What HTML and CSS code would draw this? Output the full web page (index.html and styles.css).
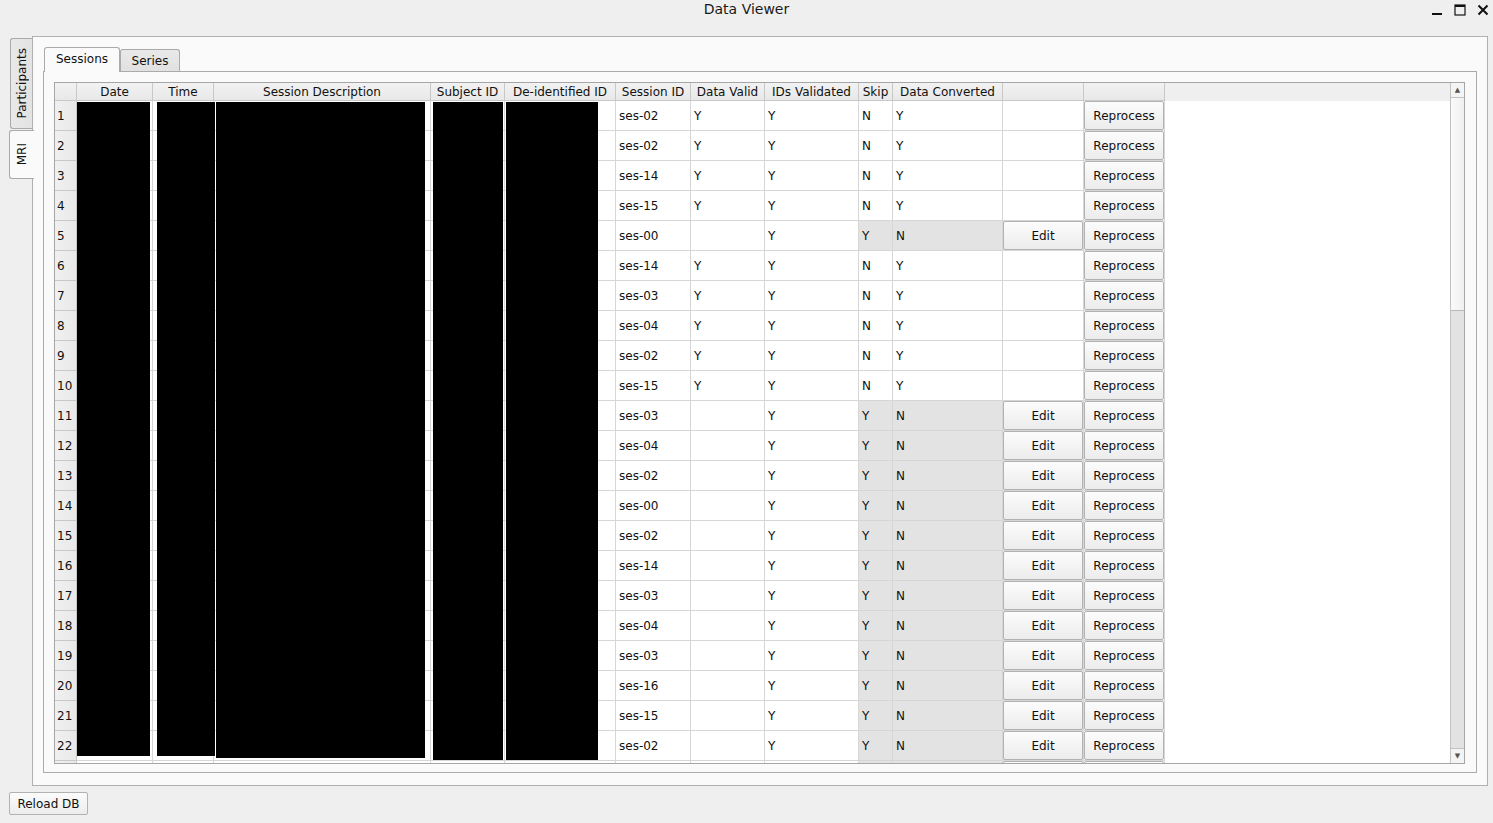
FILE: index.html
```html
<!DOCTYPE html>
<html>
<head>
<meta charset="utf-8">
<title>Data Viewer</title>
<link rel="stylesheet" href="styles.css">
</head>
<body>
<div class="titlebar">
  <div></div>
  <div class="title">Data Viewer</div>
  <div class="wctl">
    <svg width="12" height="12" viewBox="0 0 12 12"><rect x="1" y="9" width="10" height="2" fill="#111"/></svg>
    <svg width="12" height="12" viewBox="0 0 12 12"><rect x="1" y="1" width="10" height="10" fill="none" stroke="#111" stroke-width="1.2"/><rect x="1" y="1" width="10" height="2" fill="#111"/></svg>
    <svg width="12" height="12" viewBox="0 0 12 12"><path d="M1.5 1.5 L10.5 10.5 M10.5 1.5 L1.5 10.5" stroke="#111" stroke-width="2" fill="none"/></svg>
  </div>
</div>
<div class="main">
  <div class="vtabs">
    <div class="vtab"><span>Participants</span></div>
    <div class="vtab sel"><span>MRI</span></div>
  </div>
  <div class="frame">
    <div class="tabs">
      <div class="tab sel">Sessions</div>
      <div class="tab">Series</div>
    </div>
    <div class="pane">
      <div class="table">
        <div class="view">
          <div class="hdr">
            <div class="hrow">
              <div></div><div>Date</div><div>Time</div><div>Session Description</div><div>Subject ID</div><div>De-identified ID</div><div>Session ID</div><div>Data Valid</div><div>IDs Validated</div><div>Skip</div><div>Data Converted</div><div></div><div></div>
            </div>
          </div>
          <div class="body">
            <div class="row"><div class="vh">1</div><div></div><div></div><div></div><div></div><div></div><div>ses-02</div><div>Y</div><div>Y</div><div>N</div><div>Y</div><div></div><div class="bc"><button class="btn">Reprocess</button></div></div>
            <div class="row"><div class="vh">2</div><div></div><div></div><div></div><div></div><div></div><div>ses-02</div><div>Y</div><div>Y</div><div>N</div><div>Y</div><div></div><div class="bc"><button class="btn">Reprocess</button></div></div>
            <div class="row"><div class="vh">3</div><div></div><div></div><div></div><div></div><div></div><div>ses-14</div><div>Y</div><div>Y</div><div>N</div><div>Y</div><div></div><div class="bc"><button class="btn">Reprocess</button></div></div>
            <div class="row"><div class="vh">4</div><div></div><div></div><div></div><div></div><div></div><div>ses-15</div><div>Y</div><div>Y</div><div>N</div><div>Y</div><div></div><div class="bc"><button class="btn">Reprocess</button></div></div>
            <div class="row"><div class="vh">5</div><div></div><div></div><div></div><div></div><div></div><div>ses-00</div><div></div><div>Y</div><div class="g">Y</div><div class="g">N</div><div class="bc g"><button class="btn">Edit</button></div><div class="bc"><button class="btn">Reprocess</button></div></div>
            <div class="row"><div class="vh">6</div><div></div><div></div><div></div><div></div><div></div><div>ses-14</div><div>Y</div><div>Y</div><div>N</div><div>Y</div><div></div><div class="bc"><button class="btn">Reprocess</button></div></div>
            <div class="row"><div class="vh">7</div><div></div><div></div><div></div><div></div><div></div><div>ses-03</div><div>Y</div><div>Y</div><div>N</div><div>Y</div><div></div><div class="bc"><button class="btn">Reprocess</button></div></div>
            <div class="row"><div class="vh">8</div><div></div><div></div><div></div><div></div><div></div><div>ses-04</div><div>Y</div><div>Y</div><div>N</div><div>Y</div><div></div><div class="bc"><button class="btn">Reprocess</button></div></div>
            <div class="row"><div class="vh">9</div><div></div><div></div><div></div><div></div><div></div><div>ses-02</div><div>Y</div><div>Y</div><div>N</div><div>Y</div><div></div><div class="bc"><button class="btn">Reprocess</button></div></div>
            <div class="row"><div class="vh">10</div><div></div><div></div><div></div><div></div><div></div><div>ses-15</div><div>Y</div><div>Y</div><div>N</div><div>Y</div><div></div><div class="bc"><button class="btn">Reprocess</button></div></div>
            <div class="row"><div class="vh">11</div><div></div><div></div><div></div><div></div><div></div><div>ses-03</div><div></div><div>Y</div><div class="g">Y</div><div class="g">N</div><div class="bc g"><button class="btn">Edit</button></div><div class="bc"><button class="btn">Reprocess</button></div></div>
            <div class="row"><div class="vh">12</div><div></div><div></div><div></div><div></div><div></div><div>ses-04</div><div></div><div>Y</div><div class="g">Y</div><div class="g">N</div><div class="bc g"><button class="btn">Edit</button></div><div class="bc"><button class="btn">Reprocess</button></div></div>
            <div class="row"><div class="vh">13</div><div></div><div></div><div></div><div></div><div></div><div>ses-02</div><div></div><div>Y</div><div class="g">Y</div><div class="g">N</div><div class="bc g"><button class="btn">Edit</button></div><div class="bc"><button class="btn">Reprocess</button></div></div>
            <div class="row"><div class="vh">14</div><div></div><div></div><div></div><div></div><div></div><div>ses-00</div><div></div><div>Y</div><div class="g">Y</div><div class="g">N</div><div class="bc g"><button class="btn">Edit</button></div><div class="bc"><button class="btn">Reprocess</button></div></div>
            <div class="row"><div class="vh">15</div><div></div><div></div><div></div><div></div><div></div><div>ses-02</div><div></div><div>Y</div><div class="g">Y</div><div class="g">N</div><div class="bc g"><button class="btn">Edit</button></div><div class="bc"><button class="btn">Reprocess</button></div></div>
            <div class="row"><div class="vh">16</div><div></div><div></div><div></div><div></div><div></div><div>ses-14</div><div></div><div>Y</div><div class="g">Y</div><div class="g">N</div><div class="bc g"><button class="btn">Edit</button></div><div class="bc"><button class="btn">Reprocess</button></div></div>
            <div class="row"><div class="vh">17</div><div></div><div></div><div></div><div></div><div></div><div>ses-03</div><div></div><div>Y</div><div class="g">Y</div><div class="g">N</div><div class="bc g"><button class="btn">Edit</button></div><div class="bc"><button class="btn">Reprocess</button></div></div>
            <div class="row"><div class="vh">18</div><div></div><div></div><div></div><div></div><div></div><div>ses-04</div><div></div><div>Y</div><div class="g">Y</div><div class="g">N</div><div class="bc g"><button class="btn">Edit</button></div><div class="bc"><button class="btn">Reprocess</button></div></div>
            <div class="row"><div class="vh">19</div><div></div><div></div><div></div><div></div><div></div><div>ses-03</div><div></div><div>Y</div><div class="g">Y</div><div class="g">N</div><div class="bc g"><button class="btn">Edit</button></div><div class="bc"><button class="btn">Reprocess</button></div></div>
            <div class="row"><div class="vh">20</div><div></div><div></div><div></div><div></div><div></div><div>ses-16</div><div></div><div>Y</div><div class="g">Y</div><div class="g">N</div><div class="bc g"><button class="btn">Edit</button></div><div class="bc"><button class="btn">Reprocess</button></div></div>
            <div class="row"><div class="vh">21</div><div></div><div></div><div></div><div></div><div></div><div>ses-15</div><div></div><div>Y</div><div class="g">Y</div><div class="g">N</div><div class="bc g"><button class="btn">Edit</button></div><div class="bc"><button class="btn">Reprocess</button></div></div>
            <div class="row"><div class="vh">22</div><div></div><div></div><div></div><div></div><div></div><div>ses-02</div><div></div><div>Y</div><div class="g">Y</div><div class="g">N</div><div class="bc g"><button class="btn">Edit</button></div><div class="bc"><button class="btn">Reprocess</button></div></div>
            <div class="row"><div class="vh"></div><div></div><div></div><div></div><div></div><div></div><div></div><div></div><div></div><div class="g"></div><div class="g"></div><div class="bc g"><button class="btn"></button></div><div class="bc"><button class="btn"></button></div></div>
            <div class="redact r-date"></div>
            <div class="redact r-time"></div>
            <div class="redact r-desc"></div>
            <div class="redact r-subj"></div>
            <div class="redact r-deid"></div>
          </div>
        </div>
        <div class="vscroll">
          <div class="arrow">&#9650;</div>
          <div class="handle"></div>
          <div class="track"></div>
          <div class="arrow">&#9660;</div>
        </div>
      </div>
    </div>
  </div>
</div>
<div class="footer"><button class="btn reload">Reload DB</button></div>
</body>
</html>
```
FILE: styles.css
```css
* { box-sizing: border-box; }
html, body {
  margin: 0;
  padding: 0;
}
body {
  width: 1493px;
  height: 823px;
  overflow: hidden;
  background: #efefef;
  font-family: "DejaVu Sans", sans-serif;
  font-size: 12px;
  color: #111;
}
.titlebar {
  height: 19px;
  display: grid;
  grid-template-columns: 1fr auto 1fr;
  align-items: center;
}
.title {
  font-size: 14px;
  line-height: 19px;
  color: #1a1a1a;
}
.wctl {
  display: flex;
  justify-content: flex-end;
  gap: 11px;
  padding-right: 4px;
  padding-top: 1px;
}
.main {
  margin-top: 17px;
  display: flex;
  height: 750px;
  padding: 0 5px 0 9px;
}
.vtabs {
  width: 23px;
  padding-top: 2px;
  display: flex;
  flex-direction: column;
  gap: 1px;
}
.vtab {
  width: 22px;
  margin-left: 1px;
  height: 91px;
  border: 1px solid #aaa;
  border-right: none;
  border-radius: 3px 0 0 3px;
  background: linear-gradient(to right, #e9e9e9, #e2e2e2);
  display: flex;
  align-items: center;
  justify-content: center;
}
.vtab span {
  writing-mode: vertical-rl;
  transform: rotate(180deg);
  line-height: 14px;
}
.vtab.sel {
  width: 25px;
  margin-left: 0;
  height: 49px;
  background: #fafafa;
  position: relative;
  z-index: 1;
  margin-right: -2px;
}
.frame {
  flex: 1;
  min-height: 0;
  min-width: 0;
  border: 1px solid #b0b0b0;
  background: #fafafa;
  padding: 10px 10px 12px 10px;
  display: flex;
  flex-direction: column;
}
.tabs {
  height: 24px;
  flex: none;
  display: flex;
  align-items: flex-end;
  padding-left: 1px;
}
.tab {
  height: 22px;
  width: 60px;
  border: 1px solid #aaa;
  border-bottom: none;
  border-radius: 3px 3px 0 0;
  background: linear-gradient(#e9e9e9, #e1e1e1);
  display: flex;
  align-items: center;
  justify-content: center;
  padding-top: 1px;
}
.tab.sel {
  width: 76px;
  height: 25px;
  margin-bottom: -1px;
  background: #fafafa;
  position: relative;
  z-index: 1;
  padding-top: 0;
  padding-bottom: 2px;
}
.pane {
  flex: 1;
  min-height: 0;
  border: 1px solid #aaa;
  padding: 10px 11px 8px 10px;
  display: flex;
}
.table {
  flex: 1;
  min-height: 0;
  min-width: 0;
  border: 1px solid #a6a6a6;
  background: #fff;
  display: flex;
  overflow: hidden;
}
.view {
  flex: 1;
  min-height: 0;
  min-width: 0;
  display: flex;
  flex-direction: column;
  overflow: hidden;
}
.hdr {
  height: 18px;
  background: #efefef;
  flex: none;
}
.hrow, .row {
  display: grid;
  grid-template-columns: 22px 76px 61px 217px 74px 111px 75px 74px 94px 34px 110px 81px 81px;
}
.hrow > div {
  height: 18px;
  border-right: 1px solid #c8c8c8;
  border-bottom: 1px solid #c8c8c8;
  background: linear-gradient(#f2f2f2, #e8e8e8);
  text-align: center;
  line-height: 18px;
  white-space: nowrap;
  overflow: hidden;
}
.body {
  flex: 1;
  min-height: 0;
  position: relative;
  overflow: hidden;
}
.row > div {
  height: 30px;
  border-right: 1px solid #d6d6d6;
  border-bottom: 1px solid #d6d6d6;
  display: flex;
  align-items: center;
  padding-left: 3px;
  white-space: nowrap;
}
.row > div.vh {
  background: linear-gradient(to right, #f0f0f0, #e9e9e9);
  border-right-color: #c8c8c8;
  border-bottom-color: #c8c8c8;
  padding-left: 2px;
}
.row > div.g {
  background: #e3e3e3;
}
.row > div.bc {
  padding: 0;
  align-items: stretch;
}
.btn {
  font-family: inherit;
  font-size: 12px;
  color: #111;
  background: linear-gradient(#fcfcfc, #ececec);
  border: 1px solid #b2b2b2;
  border-radius: 2px;
  padding: 0;
  margin: 0;
}
.bc .btn {
  width: 100%;
  height: 100%;
}
.redact {
  position: absolute;
  background: #000;
}
.r-date { left: 22px; top: 1px; width: 73px; height: 654px; }
.r-time { left: 102px; top: 1px; width: 58px; height: 654px; }
.r-desc { left: 161px; top: 1px; width: 209px; height: 656px; }
.r-subj { left: 378px; top: 1px; width: 70px; height: 658px; }
.r-deid { left: 451px; top: 1px; width: 92px; height: 658px; }
.vscroll {
  width: 14px;
  flex: none;
  border-left: 1px solid #c2c2c2;
  display: flex;
  flex-direction: column;
  background: #e3e3e3;
}
.arrow {
  height: 14px;
  flex: none;
  background: #f4f4f4;
  font-size: 7px;
  line-height: 14px;
  text-align: center;
  color: #555;
}
.handle {
  height: 214px;
  flex: none;
  background: linear-gradient(to right, #fafafa, #f0f0f0);
  border-top: 1px solid #c2c2c2;
  border-bottom: 1px solid #b8b8b8;
}
.track {
  flex: 1;
  background: #e2e2e2;
  border-bottom: 1px solid #c2c2c2;
}
.footer {
  padding: 6px 0 0 9px;
}
.reload {
  width: 79px;
  height: 23px;
}
```
